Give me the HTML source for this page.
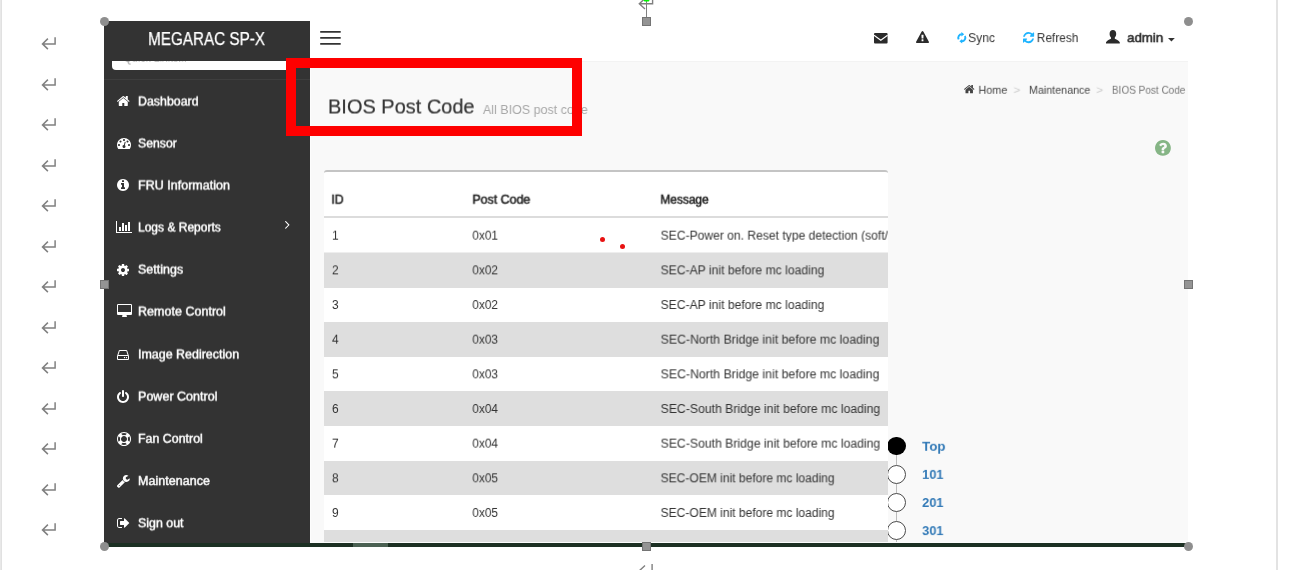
<!DOCTYPE html>
<html lang="en"><head><meta charset="utf-8"><title>BIOS Post Code - MEGARAC SP-X</title>
<style>
html,body{margin:0;padding:0;}
body{width:1296px;height:570px;overflow:hidden;background:#fff;position:relative;font-family:'Liberation Sans', sans-serif;}
ul{list-style:none;margin:0;padding:0;}
.t{will-change:transform;position:absolute;white-space:nowrap;line-height:1;transform-origin:0 0;display:block;margin:0;padding:0;font-weight:400;text-decoration:none;}
.ic{position:absolute;display:block;overflow:visible;}
.abs{position:absolute;}
#edgeL{background:linear-gradient(90deg,#e8e8e8 0 1px,#e1e1e1 1px 2px);}
#edgeR{background:#e3e3e3;}
#shot{background:#f9f9f9;}
#sidebar{background:#333;}
#logo{background:#333;}
#search{background:#fff;border-radius:4px;}
#sep{background:#3e3e3e;}
#menu li{position:absolute;left:0;width:206px;height:42px;}
#topbar{background:#fff;border-bottom:1px solid #f3f3f3;}
#box{background:#fff;border-top:2px solid #c4c4c4;border-radius:3px 3px 0 0;box-sizing:border-box;}
#box table{border-collapse:separate;border-spacing:0;width:564px;position:absolute;left:0;top:0;table-layout:fixed;}
#box th{height:44px;border-bottom:2px solid #dcdcdc;padding:0;position:relative;text-align:left;}
#box td{padding:0;position:relative;}
#box tr.g td{background:#dedede;}
#greenbar{background:#1c3023;}
#greenthumb{background:#4b6153;}
.hc{position:absolute;width:9.4px;height:9.4px;border-radius:50%;background:#8e8e8e;}
.hs{position:absolute;width:7px;height:7px;background:#949494;border:1px solid #747474;}
#redbox{border:10px solid #fe0000;box-sizing:border-box;}
.dot{position:absolute;width:5px;height:5px;border-radius:50%;background:#e81212;}

</style></head><body>
<div id="edgeL" class="abs" style="left:0px;top:0px;width:2px;height:570px;"></div><div id="edgeR" class="abs" style="left:1276px;top:0px;width:2px;height:570px;"></div>
<div id="marks">
<svg class="ic" style="left:40px;top:35.85px" width="18" height="16" viewBox="0 0 18 16"><path d="M15.1 1.2V7.9H2.6M7.9 2.6L2.5 7.9L7.9 13.1" fill="none" stroke="#808080" stroke-width="1.5"/></svg>
<svg class="ic" style="left:40px;top:76.85px" width="18" height="16" viewBox="0 0 18 16"><path d="M15.1 1.2V7.9H2.6M7.9 2.6L2.5 7.9L7.9 13.1" fill="none" stroke="#808080" stroke-width="1.5"/></svg>
<svg class="ic" style="left:40px;top:116.85px" width="18" height="16" viewBox="0 0 18 16"><path d="M15.1 1.2V7.9H2.6M7.9 2.6L2.5 7.9L7.9 13.1" fill="none" stroke="#808080" stroke-width="1.5"/></svg>
<svg class="ic" style="left:40px;top:157.85px" width="18" height="16" viewBox="0 0 18 16"><path d="M15.1 1.2V7.9H2.6M7.9 2.6L2.5 7.9L7.9 13.1" fill="none" stroke="#808080" stroke-width="1.5"/></svg>
<svg class="ic" style="left:40px;top:197.85px" width="18" height="16" viewBox="0 0 18 16"><path d="M15.1 1.2V7.9H2.6M7.9 2.6L2.5 7.9L7.9 13.1" fill="none" stroke="#808080" stroke-width="1.5"/></svg>
<svg class="ic" style="left:40px;top:238.85px" width="18" height="16" viewBox="0 0 18 16"><path d="M15.1 1.2V7.9H2.6M7.9 2.6L2.5 7.9L7.9 13.1" fill="none" stroke="#808080" stroke-width="1.5"/></svg>
<svg class="ic" style="left:40px;top:278.85px" width="18" height="16" viewBox="0 0 18 16"><path d="M15.1 1.2V7.9H2.6M7.9 2.6L2.5 7.9L7.9 13.1" fill="none" stroke="#808080" stroke-width="1.5"/></svg>
<svg class="ic" style="left:40px;top:319.85px" width="18" height="16" viewBox="0 0 18 16"><path d="M15.1 1.2V7.9H2.6M7.9 2.6L2.5 7.9L7.9 13.1" fill="none" stroke="#808080" stroke-width="1.5"/></svg>
<svg class="ic" style="left:40px;top:359.85px" width="18" height="16" viewBox="0 0 18 16"><path d="M15.1 1.2V7.9H2.6M7.9 2.6L2.5 7.9L7.9 13.1" fill="none" stroke="#808080" stroke-width="1.5"/></svg>
<svg class="ic" style="left:40px;top:400.85px" width="18" height="16" viewBox="0 0 18 16"><path d="M15.1 1.2V7.9H2.6M7.9 2.6L2.5 7.9L7.9 13.1" fill="none" stroke="#808080" stroke-width="1.5"/></svg>
<svg class="ic" style="left:40px;top:440.85px" width="18" height="16" viewBox="0 0 18 16"><path d="M15.1 1.2V7.9H2.6M7.9 2.6L2.5 7.9L7.9 13.1" fill="none" stroke="#808080" stroke-width="1.5"/></svg>
<svg class="ic" style="left:40px;top:481.85px" width="18" height="16" viewBox="0 0 18 16"><path d="M15.1 1.2V7.9H2.6M7.9 2.6L2.5 7.9L7.9 13.1" fill="none" stroke="#808080" stroke-width="1.5"/></svg>
<svg class="ic" style="left:40px;top:521.85px" width="18" height="16" viewBox="0 0 18 16"><path d="M15.1 1.2V7.9H2.6M7.9 2.6L2.5 7.9L7.9 13.1" fill="none" stroke="#808080" stroke-width="1.5"/></svg>
<svg class="ic" style="left:636px;top:0px" width="22" height="18" viewBox="0 0 22 18"><path d="M16.6 0V3.8H3.4M9 -1.6L3.3 3.8L9 9" fill="none" stroke="#808080" stroke-width="1.4"/><path d="M10.5 1V17" stroke="#808080" stroke-width="1"/><rect x="7.8" y="-1" width="5.6" height="2.4" rx="0.8" fill="#00f400"/></svg>
<svg class="ic" style="left:636px;top:562px" width="22" height="8" viewBox="0 0 22 8"><path d="M16.1 2V9.2M9 3.6L2.6 9.4" fill="none" stroke="#808080" stroke-width="1.4"/></svg>
</div>
<div id="shot" class="abs" style="left:104px;top:21px;width:1084px;height:522px">
<aside id="sidebar" class="abs" style="left:0;top:0;width:206px;height:522px">
<form><div id="search" class="abs" style="left:8px;top:20px;width:184px;height:28.5px;"></div><label class="t" style="left:19px;top:30px;font-size:12px;color:#999;transform:translate(0.90px,0.60px) scaleX(0.8757) rotate(0.0001deg);">Quick Links...</label></form>
<div id="logo" class="abs" style="left:0px;top:0px;width:206px;height:40px;"><a class="t" style="left:44px;top:9px;font-size:18px;color:#fff;transform:translate(0.10px,0.00px) scaleX(0.8471) rotate(0.0001deg);-webkit-text-stroke:0.25px #fff;">MEGARAC SP-X</a></div>
<div id="sep" class="abs" style="left:0px;top:58px;width:206px;height:1px;"></div>
<nav><ul id="menu">
<li style="top:59px">
<svg class="ic" style="left:12.90px;top:15.64px" width="12.60" height="10.02" viewBox="89.9 253 1612.2 1283"><path fill="#fff" d="M1472 992v480q0 26-19 45t-45 19h-384v-384h-256v384h-384q-26 0-45-19t-19-45v-480q0-1 .5-3t.5-3l575-474 575 474q1 2 1 6zm223-69l-62 74q-8 9-21 11h-3q-13 0-21-7l-692-577-692 577q-12 8-24 7-13-2-21-11l-62-74q-8-10-7-23.500t11-21.500l719-599q32-26 76-26t76 26l244 204v-195q0-14 9-23t23-9h192q14 0 23 9t9 23v408l219 182q10 8 11 21.500t-7 23.500z"/></svg>
<a class="t" style="left:34px;top:15px;font-size:12px;color:#fff;transform:translate(0.00px,0.50px) scaleX(1.0317) rotate(0.0001deg);-webkit-text-stroke:0.42px #fff;">Dashboard</a>
</li>
<li style="top:101px">
<svg class="ic" style="left:12.80px;top:16.00px" width="14.00" height="11.00" viewBox="0 256 1792 1408"><path fill="#fff" d="M384 1152q0-53-37.500-90.500t-90.500-37.500-90.500 37.500-37.500 90.500 37.500 90.500 90.500 37.500 90.500-37.500 37.500-90.500zm192-448q0-53-37.500-90.500t-90.500-37.500-90.500 37.500-37.500 90.500 37.500 90.500 90.500 37.500 90.500-37.500 37.500-90.500zm428 481l101-382q6-26-7.500-48.500t-38.500-29.500-48 6.500-30 39.500l-101 382q-60 5-107 43.500t-63 98.500q-20 77 20 146t117 89 146-20 89-117q16-60-6-117t-72-91zm660-33q0-53-37.500-90.500t-90.500-37.500-90.500 37.500-37.500 90.500 37.500 90.500 90.500 37.500 90.500-37.500 37.500-90.500zm-640-640q0-53-37.500-90.500t-90.500-37.500-90.500 37.500-37.500 90.500 37.500 90.500 90.500 37.500 90.500-37.500 37.500-90.500zm448 192q0-53-37.500-90.500t-90.500-37.500-90.500 37.500-37.500 90.500 37.500 90.500 90.500 37.500 90.500-37.500 37.500-90.500zm320 448q0 261-141 483-19 29-54 29h-1402q-35 0-54-29-141-221-141-483 0-182 71-348t191-286 286-191 348-71 348 71 286 191 191 286 71 348z"/></svg>
<a class="t" style="left:34px;top:15px;font-size:12px;color:#fff;transform:translate(0.00px,0.50px) scaleX(1.0197) rotate(0.0001deg);-webkit-text-stroke:0.42px #fff;">Sensor</a>
</li>
<li style="top:143px">
<svg class="ic" style="left:12.65px;top:15.30px" width="12.00" height="12.00" viewBox="128 128 1536 1536"><path fill="#fff" d="M1152 1376v-160q0-14-9-23t-23-9h-96v-512q0-14-9-23t-23-9h-320q-14 0-23 9t-9 23v160q0 14 9 23t23 9h96v320h-96q-14 0-23 9t-9 23v160q0 14 9 23t23 9h448q14 0 23-9t9-23zm-128-896v-160q0-14-9-23t-23-9h-192q-14 0-23 9t-9 23v160q0 14 9 23t23 9h192q14 0 23-9t9-23zm640 416q0 209-103 385.500t-279.500 279.500-385.500 103-385.500-103-279.500-279.500-103-385.500 103-385.500 279.500-279.500 385.500-103 385.500 103 279.500 279.500 103 385.500z"/></svg>
<a class="t" style="left:34px;top:15px;font-size:12px;color:#fff;transform:translate(0.00px,0.50px) scaleX(1.0437) rotate(0.0001deg);-webkit-text-stroke:0.42px #fff;">FRU Information</a>
</li>
<li style="top:185px">
<svg class="ic" style="left:12.35px;top:15.40px" width="16.00" height="12.00" viewBox="0 128 2048 1536"><path fill="#fff" d="M640 896v512h-256v-512h256zm384-512v1024h-256v-1024h256zm1024 1152v128h-2048v-1536h128v1408h1920zm-640-896v768h-256v-768h256zm384-384v1152h-256v-1152h256z"/></svg>
<a class="t" style="left:34px;top:15px;font-size:12px;color:#fff;transform:translate(0.00px,0.50px) scaleX(1.0007) rotate(0.0001deg);-webkit-text-stroke:0.42px #fff;">Logs &amp; Reports</a>
<svg class="ic" style="left:181.43px;top:14.90px" width="4.55" height="7.80" viewBox="589 461 582 998"><path fill="#fff" d="M1171 960q0 13-10 23l-466 466q-10 10-23 10t-23-10l-50-50q-10-10-10-23t10-23l393-393-393-393q-10-10-10-23t10-23l50-50q10-10 23-10t23 10l466 466q10 10 10 23z"/></svg>
</li>
<li style="top:227px">
<svg class="ic" style="left:12.80px;top:15.70px" width="12.00" height="12.00" viewBox="128 128 1536 1536"><path fill="#fff" d="M1152 896q0-106-75-181t-181-75-181 75-75 181 75 181 181 75 181-75 75-181zm512-109v222q0 12-8 23t-20 13l-185 28q-19 54-39 91 35 50 107 138 10 12 10 25t-9 23q-27 37-99 108t-94 71q-12 0-26-9l-138-108q-44 23-91 38-16 136-29 186-7 28-36 28h-222q-14 0-24.500-8.500t-11.500-21.500l-28-184q-49-16-90-37l-141 107q-10 9-25 9-14 0-25-11-126-114-165-168-7-10-7-23 0-12 8-23 15-21 51-66.500t54-70.500q-27-50-41-99l-183-27q-13-2-21-12.500t-8-23.500v-222q0-12 8-23t19-13l186-28q14-46 39-92-40-57-107-138-10-12-10-24 0-10 9-23 26-36 98.500-107.500t94.500-71.500q13 0 26 10l138 107q44-23 91-38 16-136 29-186 7-28 36-28h222q14 0 24.500 8.500t11.500 21.500l28 184q49 16 90 37l142-107q9-9 24-9 13 0 25 10 129 119 165 170 7 8 7 22 0 12-8 23-15 21-51 66.500t-54 70.500q26 50 41 98l183 28q13 2 21 12.500t8 23.500z"/></svg>
<a class="t" style="left:34px;top:15px;font-size:12px;color:#fff;transform:translate(0.00px,0.60px) scaleX(1.0397) rotate(0.0001deg);-webkit-text-stroke:0.42px #fff;">Settings</a>
</li>
<li style="top:269px">
<svg class="ic" style="left:12.65px;top:14.40px" width="15.00" height="13.00" viewBox="-64 0 1920 1664"><path fill="#fff" d="M1728 992v-832q0-13-9.500-22.500t-22.500-9.500h-1600q-13 0-22.500 9.500t-9.500 22.500v832q0 13 9.500 22.500t22.500 9.500h1600q13 0 22.500-9.500t9.500-22.500zm128-832v1088q0 66-47 113t-113 47h-544q0 37 16 77.500t32 71 16 43.500q0 26-19 45t-45 19h-512q-26 0-45-19t-19-45q0-14 16-44t32-70 16-78h-544q-66 0-113-47t-47-113v-1088q0-66 47-113t113-47h1600q66 0 113 47t47 113z"/></svg>
<a class="t" style="left:34px;top:15px;font-size:12px;color:#fff;transform:translate(0.00px,0.60px) scaleX(1.0444) rotate(0.0001deg);-webkit-text-stroke:0.42px #fff;">Remote Control</a>
</li>
<li style="top:312px">
<svg class="ic" style="left:12.65px;top:16.75px" width="12.00" height="10.00" viewBox="0 256 1536 1280"><path fill="#fff" d="M1040 1216q0 33-23.500 56.500t-56.500 23.500-56.500-23.500-23.500-56.500 23.500-56.500 56.500-23.500 56.500 23.500 23.500 56.500zm256 0q0 33-23.500 56.500t-56.500 23.500-56.500-23.500-23.500-56.500 23.500-56.500 56.500-23.500 56.500 23.500 23.500 56.500zm112 160v-320q0-13-9.500-22.500t-22.500-9.500h-1216q-13 0-22.500 9.500t-9.500 22.500v320q0 13 9.500 22.500t22.500 9.500h1216q13 0 22.500-9.500t9.500-22.500zm-1230-480h1180l-157-482q-4-13-16-21.500t-26-8.500h-782q-14 0-26 8.500t-16 21.500zm1358 160v320q0 66-47 113t-113 47h-1216q-66 0-113-47t-47-113v-320q0-25 16-75l197-606q17-53 63-86t101-33h782q55 0 101 33t63 86l197 606q16 50 16 75z"/></svg>
<a class="t" style="left:34px;top:15px;font-size:12px;color:#fff;transform:translate(0.00px,0.50px) scaleX(1.0379) rotate(0.0001deg);-webkit-text-stroke:0.42px #fff;">Image Redirection</a>
</li>
<li style="top:354px">
<svg class="ic" style="left:12.65px;top:14.65px" width="12.00" height="13.00" viewBox="128 0 1536 1664"><path fill="#fff" d="M1664 896q0 156-61 298t-164 245-245 164-298 61-298-61-245-164-164-245-61-298q0-182 80.500-343t226.500-270q43-32 95.500-25t83.500 50q32 42 24.500 94.500t-49.500 84.500q-98 74-151.500 181t-53.500 228q0 104 40.500 198.500t109.500 163.500 163.500 109.500 198.500 40.500 198.500-40.500 163.500-109.500 109.500-163.500 40.500-198.500q0-121-53.500-228t-151.500-181q-42-32-49.500-84.500t24.500-94.500q31-43 84-50t95 25q146 109 226.500 270t80.500 343zm-640-768v640q0 52-38 90t-90 38-90-38-38-90v-640q0-52 38-90t90-38 90 38 38 90z"/></svg>
<a class="t" style="left:34px;top:15px;font-size:12px;color:#fff;transform:translate(0.00px,0.60px) scaleX(1.0440) rotate(0.0001deg);-webkit-text-stroke:0.42px #fff;">Power Control</a>
</li>
<li style="top:396px">
<svg class="ic" style="left:12.50px;top:14.80px" width="14.00" height="14.00" viewBox="0 0 1792 1792"><path fill="#fff" d="M896 0q182 0 348 71t286 191 191 286 71 348-71 348-191 286-286 191-348 71-348-71-286-191-191-286-71-348 71-348 191-286 286-191 348-71zm0 128q-190 0-361 90l194 194q82-28 167-28t167 28l194-194q-171-90-361-90zm-678 1129l194-194q-28-82-28-167t28-167l-194-194q-90 171-90 361t90 361zm678 407q190 0 361-90l-194-194q-82 28-167 28t-167-28l-194 194q171 90 361 90zm0-384q159 0 271.500-112.500t112.500-271.500-112.500-271.500-271.500-112.500-271.500 112.500-112.500 271.500 112.500 271.500 271.500 112.500zm484-217l194 194q90-171 90-361t-90-361l-194 194q28 82 28 167t-28 167z"/></svg>
<a class="t" style="left:34px;top:15px;font-size:12px;color:#fff;transform:translate(0.00px,0.80px) scaleX(1.0331) rotate(0.0001deg);-webkit-text-stroke:0.42px #fff;">Fan Control</a>
</li>
<li style="top:438px">
<svg class="ic" style="left:12.74px;top:15.73px" width="12.82" height="12.84" viewBox="85 128 1641 1643"><path fill="#fff" d="M448 1472q0-26-19-45t-45-19-45 19-19 45 19 45 45 19 45-19 19-45zm644-420l-682 682q-37 37-90 37-52 0-91-37l-106-108q-38-36-38-90 0-53 38-91l681-681q39 98 114.500 173.500t173.500 114.500zm634-435q0 39-23 106-47 134-164.500 217.500t-258.500 83.500q-185 0-316.500-131.500t-131.500-316.500 131.500-316.500 316.500-131.500q58 0 121.500 16.500t107.500 46.500q16 11 16 28t-16 28l-293 169v224l193 107q5-3 79-48.500t135.500-81 70.500-35.500q15 0 23.500 10t8.500 25z"/></svg>
<a class="t" style="left:34px;top:16px;font-size:12px;color:#fff;transform:translate(0.00px,0.10px) scaleX(1.0460) rotate(0.0001deg);-webkit-text-stroke:0.42px #fff;">Maintenance</a>
</li>
<li style="top:480px">
<svg class="ic" style="left:12.67px;top:17.30px" width="12.25" height="10.00" viewBox="64 256 1568 1280"><path fill="#fff" d="M704 1440q0 4 1 20t.5 26.500-3 23.500-10 19.500-20.500 6.500h-320q-119 0-203.500-84.500t-84.500-203.500v-704q0-119 84.500-203.500t203.500-84.500h320q13 0 22.500 9.500t9.500 22.500q0 4 1 20t.5 26.500-3 23.500-10 19.500-20.500 6.500h-320q-66 0-113 47t-47 113v704q0 66 47 113t113 47h312l11.500 1 11.500 3 8 5.500 7 9 2 13.500zm928-544q0 26-19 45l-544 544q-19 19-45 19t-45-19-19-45v-288h-448q-26 0-45-19t-19-45v-384q0-26 19-45t45-19h448v-288q0-26 19-45t45-19 45 19l544 544q19 19 19 45z"/></svg>
<a class="t" style="left:34px;top:16px;font-size:12px;color:#fff;transform:translate(0.00px,0.30px) scaleX(1.0325) rotate(0.0001deg);-webkit-text-stroke:0.42px #fff;">Sign out</a>
</li>
</ul></nav>
</aside>
<header id="topbar" class="abs" style="left:206px;top:0;width:878px;height:40px">
<svg class="ic" style="left:10px;top:9px" width="22" height="16" viewBox="0 0 22 16"><path d="M0.2 1.9H20.7M0.2 7.9H20.7M0.2 13.9H20.7" stroke="#333" stroke-width="1.8"/></svg>
<nav>
<svg class="ic" style="left:564px;top:11.8px" width="13.6" height="10.4" viewBox="0 0 136 104"><rect width="136" height="104" rx="10" fill="#2b2b2b"/><path d="M0 22L68 72L136 22" fill="none" stroke="#fff" stroke-width="11"/></svg>
<svg class="ic" style="left:605.74px;top:9.96px" width="13.01" height="12.07" viewBox="-1.0 0 1794.0 1664"><path fill="#2b2b2b" d="M1024 1375v-190q0-14-9.500-23.500t-22.500-9.500h-192q-13 0-22.500 9.500t-9.500 23.500v190q0 14 9.500 23.500t22.500 9.500h192q13 0 22.500-9.500t9.500-23.500zm-2-374l18-459q0-12-10-19-13-11-24-11h-220q-11 0-24 11-10 7-10 21l17 457q0 10 10 16.500t24 6.500h185q14 0 23.500-6.500t10.500-16.500zm-14-934l768 1408q35 63-2 126-17 29-46.500 46t-63.500 17h-1536q-34 0-63.500-17t-46.500-46q-37-63-2-126l768-1408q17-31 47-49t65-18 65 18 47 49z"/></svg>
<svg class="ic" style="left:646.6px;top:10.6px" width="9.6" height="11.4" viewBox="0 0 96 114"><g fill="none" stroke="#1eb4ff" stroke-width="19"><path d="M48 22A35 35 0 0 0 17 74"/><path d="M48 92A35 35 0 0 0 79 40"/></g><path d="M44 0L72 22L44 44Z" fill="#1eb4ff"/><path d="M52 70L24 92L52 114Z" fill="#1eb4ff"/></svg>
<a class="t" style="left:658px;top:10px;font-size:13px;color:#333;transform:translate(0.15px,0.10px) scaleX(0.9261) rotate(0.0001deg);">Sync</a>
<svg class="ic" style="left:713.03px;top:11.03px" width="11.14" height="11.14" viewBox="128 128 1536 1536"><path fill="#1eb4ff" d="M1639 1056q0 5-1 7-64 268-268 434.500t-478 166.500q-146 0-282.500-55t-243.500-157l-129 129q-19 19-45 19t-45-19-19-45v-448q0-26 19-45t45-19h448q26 0 45 19t19 45-19 45l-137 137q71 66 161 102t187 36q134 0 250-65t186-179q11-17 53-117 8-23 30-23h192q13 0 22.500 9.500t9.500 22.500zm25-800v448q0 26-19 45t-45 19h-448q-26 0-45-19t-19-45 19-45l138-138q-148-137-349-137-134 0-250 65t-186 179q-11 17-53 117-8 23-30 23h-199q-13 0-22.500-9.500t-9.500-22.500v-7q65-268 270-434.500t480-166.500q146 0 284 55.500t245 156.500l130-129q19-19 45-19t45 19 19 45z"/></svg>
<a class="t" style="left:726px;top:10px;font-size:13px;color:#333;transform:translate(0.75px,0.10px) scaleX(0.9174) rotate(0.0001deg);">Refresh</a>
<svg class="ic" style="left:796.3px;top:9px" width="13.8" height="13.6" viewBox="0 0 138 136"><path fill="#2b2b2b" d="M69 0C90 0 102 16 102 38C102 56 96 68 88 76V88C100 96 128 104 138 122V136H0V122C10 104 38 96 50 88V76C42 68 36 56 36 38C36 16 48 0 69 0Z"/></svg>
<a class="t" style="left:817px;top:10px;font-size:13px;color:#333;transform:translate(0.15px,0.10px) scaleX(1.0211) rotate(0.0001deg);-webkit-text-stroke:0.5px #222;">admin</a>
<svg class="ic" style="left:858.3px;top:16.5px" width="6.8" height="3.6" viewBox="0 0 68 36"><path d="M0 0H68L34 36Z" fill="#333"/></svg>
</nav>
</header>
<main id="content" class="abs" style="left:206px;top:41px;width:878px;height:481px">
<section id="content-header">
<h1 class="t" style="left:18px;top:34px;font-size:20px;color:#333;transform:translate(0.00px,0.50px) scaleX(0.9990) rotate(0.0001deg);-webkit-text-stroke:0.2px #333;">BIOS Post Code</h1>
<small class="t" style="left:172px;top:41px;font-size:13.5px;color:#a8a8a8;transform:translate(0.93px,0.00px) scaleX(0.9259) rotate(0.0001deg);">All BIOS post code</small>
<nav id="breadcrumb">
<svg class="ic" style="left:653.93px;top:23.15px" width="10.44" height="8.31" viewBox="89.9 253 1612.2 1283"><path fill="#444" d="M1472 992v480q0 26-19 45t-45 19h-384v-384h-256v384h-384q-26 0-45-19t-19-45v-480q0-1 .5-3t.5-3l575-474 575 474q1 2 1 6zm223-69l-62 74q-8 9-21 11h-3q-13 0-21-7l-692-577-692 577q-12 8-24 7-13-2-21-11l-62-74q-8-10-7-23.500t11-21.500l719-599q32-26 76-26t76 26l244 204v-195q0-14 9-23t23-9h192q14 0 23 9t9 23v408l219 182q10 8 11 21.500t-7 23.500z"/></svg>
<a class="t" style="left:668px;top:22px;font-size:11px;color:#444;transform:translate(0.45px,0.80px) scaleX(0.9879) rotate(0.0001deg);">Home</a>
<span class="t" style="left:703px;top:22px;font-size:11px;color:#cdcdcd;transform:translate(0.45px,0.80px) scaleX(1.0858) rotate(0.0001deg);">&gt;</span>
<a class="t" style="left:718px;top:22px;font-size:11px;color:#444;transform:translate(0.95px,0.80px) scaleX(0.9760) rotate(0.0001deg);">Maintenance</a>
<span class="t" style="left:786px;top:22px;font-size:11px;color:#cdcdcd;transform:translate(0.15px,0.80px) scaleX(1.0858) rotate(0.0001deg);">&gt;</span>
<span class="t" style="left:801px;top:22px;font-size:11px;color:#777;transform:translate(0.95px,0.80px) scaleX(0.9104) rotate(0.0001deg);">BIOS Post Code</span>
</nav>
<svg class="ic" style="left:845.07px;top:77.77px" width="15.86" height="15.86" viewBox="128 128 1536 1536"><path fill="#86b586" d="M1024 1376v-192q0-14-9-23t-23-9h-192q-14 0-23 9t-9 23v192q0 14 9 23t23 9h192q14 0 23-9t9-23zm256-672q0-88-55.500-163t-138.500-116-170-41q-243 0-371 213-15 24 8 42l132 100q7 6 19 6 16 0 25-12 53-68 86-92 34-24 86-24 48 0 85.500 26t37.500 59q0 38-20 61t-68 45q-63 28-115.500 86.500t-52.500 125.500v36q0 14 9 23t23 9h192q14 0 23-9t9-23q0-19 21.500-49.500t54.500-49.500q32-18 49-28.500t46-35 44.500-48 28-60.500 12.500-81zm384 192q0 209-103 385.500t-279.500 279.500-385.500 103-385.500-103-279.500-279.500-103-385.500 103-385.500 279.500-279.500 385.500-103 385.500 103 279.500 279.500 103 385.500z"/></svg>
</section>
<nav id="pager">
<div class="abs" style="left:585.5px;top:384px;width:1.6px;height:97px;background:#bcbcbc"></div>
<div class="abs" style="left:577px;top:374.7px;width:18.6px;height:18.6px;border-radius:50%;background:#000"></div>
<a class="t" style="left:612px;top:377px;font-size:13.33px;color:#337ab7;transform:translate(0.13px,0.80px) scaleX(0.9984) rotate(0.0001deg);font-weight:700;">Top</a>
<div class="abs" style="left:576.7px;top:402.5px;width:17.2px;height:17.2px;border-radius:50%;background:#fff;border:1px solid #4a4a4a"></div>
<a class="t" style="left:612px;top:405px;font-size:13.33px;color:#337ab7;transform:translate(0.13px,0.90px) scaleX(0.9618) rotate(0.0001deg);font-weight:700;">101</a>
<div class="abs" style="left:576.7px;top:430.6px;width:17.2px;height:17.2px;border-radius:50%;background:#fff;border:1px solid #4a4a4a"></div>
<a class="t" style="left:612px;top:434px;font-size:13.33px;color:#337ab7;transform:translate(0.13px,0.00px) scaleX(0.9618) rotate(0.0001deg);font-weight:700;">201</a>
<div class="abs" style="left:576.7px;top:458.7px;width:17.2px;height:17.2px;border-radius:50%;background:#fff;border:1px solid #4a4a4a"></div>
<a class="t" style="left:612px;top:462px;font-size:13.33px;color:#337ab7;transform:translate(0.13px,0.10px) scaleX(0.9618) rotate(0.0001deg);font-weight:700;">301</a>
</nav>
<section id="box" class="abs" style="left:14px;top:108px;width:564px;height:373px"><table><colgroup><col style="width:140px"><col style="width:188px"><col style="width:236px"></colgroup><thead><tr>
<th><span class="t" style="left:7px;top:21px;font-size:12px;color:#222;transform:translate(0.30px,0.70px) scaleX(1.0233) rotate(0.0001deg);-webkit-text-stroke:0.5px #222;">ID</span></th>
<th><span class="t" style="left:8px;top:21px;font-size:12px;color:#222;transform:translate(0.40px,0.70px) scaleX(1.0345) rotate(0.0001deg);-webkit-text-stroke:0.5px #222;">Post Code</span></th>
<th><span class="t" style="left:8px;top:21px;font-size:12px;color:#222;transform:translate(0.40px,0.70px) scaleX(0.9934) rotate(0.0001deg);-webkit-text-stroke:0.5px #222;">Message</span></th>
</tr></thead><tbody>
<tr class="" style="height:35px">
<td><span class="t" style="left:8px;top:11px;font-size:12px;color:#333;transform:translate(0.00px,0.70px) scaleX(0.9989) rotate(0.0001deg);">1</span></td>
<td><span class="t" style="left:8px;top:11px;font-size:12px;color:#333;transform:translate(0.30px,0.70px) scaleX(0.9903) rotate(0.0001deg);">0x01</span></td>
<td><span class="t" style="left:8px;top:11px;font-size:12px;color:#333;width:calc(227.40px / 1.0085);overflow:hidden;transform:translate(0.60px,0.70px) scaleX(1.0085) rotate(0.0001deg);">SEC-Power on. Reset type detection (soft/</span></td>
</tr>
<tr class="g" style="height:35px">
<td><span class="t" style="left:8px;top:11px;font-size:12px;color:#333;transform:translate(0.00px,0.36px) scaleX(0.9989) rotate(0.0001deg);">2</span></td>
<td><span class="t" style="left:8px;top:11px;font-size:12px;color:#333;transform:translate(0.30px,0.36px) scaleX(0.9903) rotate(0.0001deg);">0x02</span></td>
<td><span class="t" style="left:8px;top:11px;font-size:12px;color:#333;transform:translate(0.60px,0.36px) scaleX(1.0112) rotate(0.0001deg);">SEC-AP init before mc loading</span></td>
</tr>
<tr class="" style="height:34px">
<td><span class="t" style="left:8px;top:11px;font-size:12px;color:#333;transform:translate(0.00px,0.02px) scaleX(0.9989) rotate(0.0001deg);">3</span></td>
<td><span class="t" style="left:8px;top:11px;font-size:12px;color:#333;transform:translate(0.30px,0.02px) scaleX(0.9903) rotate(0.0001deg);">0x02</span></td>
<td><span class="t" style="left:8px;top:11px;font-size:12px;color:#333;transform:translate(0.60px,0.02px) scaleX(1.0112) rotate(0.0001deg);">SEC-AP init before mc loading</span></td>
</tr>
<tr class="g" style="height:35px">
<td><span class="t" style="left:8px;top:11px;font-size:12px;color:#333;transform:translate(0.00px,0.68px) scaleX(0.9989) rotate(0.0001deg);">4</span></td>
<td><span class="t" style="left:8px;top:11px;font-size:12px;color:#333;transform:translate(0.30px,0.68px) scaleX(0.9903) rotate(0.0001deg);">0x03</span></td>
<td><span class="t" style="left:8px;top:11px;font-size:12px;color:#333;transform:translate(0.60px,0.68px) scaleX(1.0250) rotate(0.0001deg);">SEC-North Bridge init before mc loading</span></td>
</tr>
<tr class="" style="height:34px">
<td><span class="t" style="left:8px;top:11px;font-size:12px;color:#333;transform:translate(0.00px,0.34px) scaleX(0.9989) rotate(0.0001deg);">5</span></td>
<td><span class="t" style="left:8px;top:11px;font-size:12px;color:#333;transform:translate(0.30px,0.34px) scaleX(0.9903) rotate(0.0001deg);">0x03</span></td>
<td><span class="t" style="left:8px;top:11px;font-size:12px;color:#333;transform:translate(0.60px,0.34px) scaleX(1.0250) rotate(0.0001deg);">SEC-North Bridge init before mc loading</span></td>
</tr>
<tr class="g" style="height:35px">
<td><span class="t" style="left:8px;top:12px;font-size:12px;color:#333;transform:translate(0.00px,0.00px) scaleX(0.9989) rotate(0.0001deg);">6</span></td>
<td><span class="t" style="left:8px;top:12px;font-size:12px;color:#333;transform:translate(0.30px,0.00px) scaleX(0.9903) rotate(0.0001deg);">0x04</span></td>
<td><span class="t" style="left:8px;top:12px;font-size:12px;color:#333;transform:translate(0.60px,0.00px) scaleX(1.0196) rotate(0.0001deg);">SEC-South Bridge init before mc loading</span></td>
</tr>
<tr class="" style="height:35px">
<td><span class="t" style="left:8px;top:11px;font-size:12px;color:#333;transform:translate(0.00px,0.66px) scaleX(0.9989) rotate(0.0001deg);">7</span></td>
<td><span class="t" style="left:8px;top:11px;font-size:12px;color:#333;transform:translate(0.30px,0.66px) scaleX(0.9903) rotate(0.0001deg);">0x04</span></td>
<td><span class="t" style="left:8px;top:11px;font-size:12px;color:#333;transform:translate(0.60px,0.66px) scaleX(1.0196) rotate(0.0001deg);">SEC-South Bridge init before mc loading</span></td>
</tr>
<tr class="g" style="height:34px">
<td><span class="t" style="left:8px;top:11px;font-size:12px;color:#333;transform:translate(0.00px,0.32px) scaleX(0.9989) rotate(0.0001deg);">8</span></td>
<td><span class="t" style="left:8px;top:11px;font-size:12px;color:#333;transform:translate(0.30px,0.32px) scaleX(0.9903) rotate(0.0001deg);">0x05</span></td>
<td><span class="t" style="left:8px;top:11px;font-size:12px;color:#333;transform:translate(0.60px,0.32px) scaleX(1.0033) rotate(0.0001deg);">SEC-OEM init before mc loading</span></td>
</tr>
<tr class="" style="height:35px">
<td><span class="t" style="left:8px;top:11px;font-size:12px;color:#333;transform:translate(0.00px,0.98px) scaleX(0.9989) rotate(0.0001deg);">9</span></td>
<td><span class="t" style="left:8px;top:11px;font-size:12px;color:#333;transform:translate(0.30px,0.98px) scaleX(0.9903) rotate(0.0001deg);">0x05</span></td>
<td><span class="t" style="left:8px;top:11px;font-size:12px;color:#333;transform:translate(0.60px,0.98px) scaleX(1.0033) rotate(0.0001deg);">SEC-OEM init before mc loading</span></td>
</tr>
<tr class="g" style="height:13px">
<td></td><td></td><td></td>
</tr>
</tbody></table><div class="abs" style="left:0;top:80px;width:564px;height:1px;background:#eee"></div></section>
<div class="abs" style="left:0px;top:480px;width:878px;height:1px;background:#fcfcfc"></div><div class="abs" style="left:0px;top:0px;width:1px;height:481px;background:#fdfdfd"></div>
</main>
</div>
<div id="greenbar" class="abs" style="left:104px;top:543px;width:1084px;height:4px;"></div><div id="greenthumb" class="abs" style="left:353px;top:543px;width:35px;height:4px;"></div>
<div class="hc" style="left:99.7px;top:16.9px"></div>
<div class="hc" style="left:1183.6px;top:16.9px"></div>
<div class="hc" style="left:99.6px;top:541.6px"></div>
<div class="hc" style="left:1183.6px;top:541.6px"></div>
<div class="hs" style="left:642px;top:17px"></div>
<div class="hs" style="left:642px;top:542px"></div>
<div class="hs" style="left:100px;top:280px"></div>
<div class="hs" style="left:1184px;top:280px"></div>
<div id="redbox" class="abs" style="left:286px;top:58px;width:296px;height:77.5px;"></div>
<div class="dot" style="left:600.3px;top:236.5px"></div><div class="dot" style="left:620.2px;top:243.7px"></div>
</body></html>
